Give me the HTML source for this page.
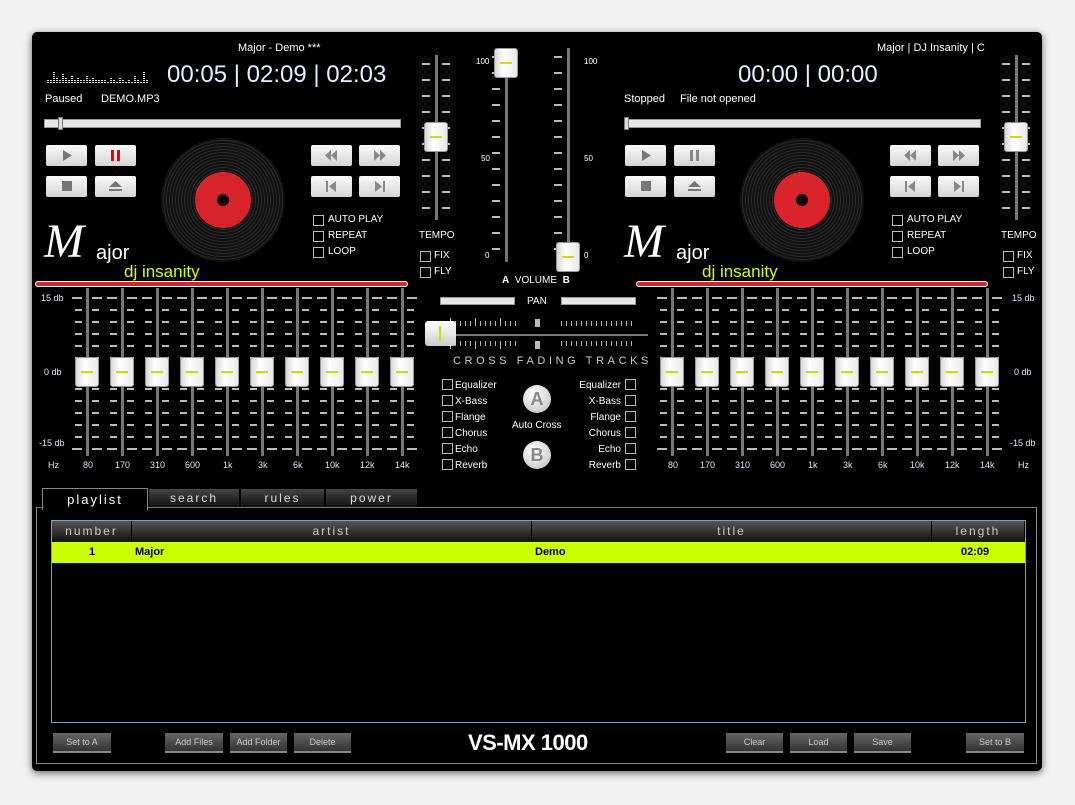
<!DOCTYPE html>
<html><head><meta charset="utf-8">
<style>
*{margin:0;padding:0;box-sizing:border-box}
body{width:1075px;height:805px;background:#f2f2f2;position:relative;overflow:hidden;font-family:"Liberation Sans",sans-serif;color:#fff}
#win{position:absolute;left:32px;top:32px;width:1010px;height:739px;background:#000;border-radius:5px;box-shadow:0 2px 8px rgba(0,0,0,.6)}
.a{position:absolute;white-space:nowrap}
.t{font-size:11px;color:#fff}
.lbl{font-size:10px;color:#fff}
.time{font-size:24px;color:#e4f2ff}
.bar{position:absolute;background:#e6e8e8;border:1px solid #999}
.btn{position:absolute;width:41px;height:21px;background:linear-gradient(#fafafa,#d4d4d4);border-radius:2px}
.cb{position:absolute;width:11px;height:11px;border:1px solid #bbb}
.vin{position:absolute;border-radius:50%;background:repeating-radial-gradient(circle,#111 0 2px,#2a2a2a 2px 3px)}
.lab{position:absolute;border-radius:50%;background:radial-gradient(circle,#000 0 6px,#d8232a 6px 28px,#111 28px)}
.thumb{position:absolute;width:24px;height:30px;background:linear-gradient(90deg,#d8d8d8,#fff 40%,#e8e8e8);border-radius:3px;border:1px solid #999}
.thumb:after{content:"";position:absolute;left:5px;right:5px;top:13px;height:2px;background:#c8e000}
.track{position:absolute;width:3px;background:#777}
.tick{position:absolute;height:2px;background:#bbb}
.redbar{position:absolute;height:6px;background:#d8232a;border-radius:3px;border:1px solid #fff}
.tab{position:absolute;top:489px;height:18px;background:linear-gradient(#444,#111);font-size:12px;letter-spacing:2px;text-align:center;line-height:18px;color:#ddd;border-right:2px solid #000}
.pb{position:absolute;top:733px;height:20px;background:linear-gradient(#666,#333);border-bottom:2px solid #888;font-size:9px;color:#ccc;text-align:center;line-height:18px}
.hdr{position:absolute;top:521px;height:21px;background:linear-gradient(#555,#111);font-size:12px;letter-spacing:2px;color:#ccc;text-align:center;line-height:20px;border-right:1px solid #000}
.script{font-family:"Liberation Serif",serif;font-style:italic;font-size:48px;color:#fff}
.db{font-size:9px;color:#dce8f4}
</style></head><body>
<div id="win"></div>
<div id="L"></div>

<div class="a t" style="left:238px;top:42px">Major - Demo ***</div>
<div class="a time" style="left:167px;top:61px">00:05 | 02:09 | 02:03</div>
<div class="a t" style="left:45px;top:93px">Paused</div>
<div class="a t" style="left:101px;top:93px">DEMO.MP3</div>
<div class="bar" style="left:44px;top:119px;width:357px;height:9px"></div>
<div class="a" style="left:58px;top:117px;width:5px;height:13px;background:#ddd;border:1px solid #777"></div>
<div class="a lbl" style="left:328px;top:214px">AUTO PLAY</div>
<div class="a lbl" style="left:328px;top:230px">REPEAT</div>
<div class="a lbl" style="left:328px;top:246px">LOOP</div>
<div class="a script" style="left:44px;top:214px">M</div>
<div class="a" style="left:96px;top:242px;font-size:20px">ajor</div>
<div class="a" style="left:124px;top:262px;font-size:17px;color:#d4ff00">dj insanity</div>
<div class="redbar" style="left:35px;top:281px;width:373px"></div>
<div class="a lbl" style="left:419px;top:230px">TEMPO</div>
<div class="a lbl" style="left:434px;top:250px">FIX</div>
<div class="a lbl" style="left:434px;top:266px">FLY</div>

<div class="a t" style="left:877px;top:42px">Major | DJ Insanity | C</div>
<div class="a time" style="left:738px;top:61px">00:00 | 00:00</div>
<div class="a t" style="left:624px;top:93px">Stopped</div>
<div class="a t" style="left:680px;top:93px">File not opened</div>
<div class="bar" style="left:624px;top:119px;width:357px;height:9px"></div>
<div class="a" style="left:624px;top:117px;width:5px;height:13px;background:#ddd;border:1px solid #777"></div>
<div class="a lbl" style="left:907px;top:214px">AUTO PLAY</div>
<div class="a lbl" style="left:907px;top:230px">REPEAT</div>
<div class="a lbl" style="left:907px;top:246px">LOOP</div>
<div class="a script" style="left:624px;top:214px">M</div>
<div class="a" style="left:676px;top:242px;font-size:20px">ajor</div>
<div class="a" style="left:702px;top:262px;font-size:17px;color:#d4ff00">dj insanity</div>
<div class="redbar" style="left:636px;top:281px;width:352px"></div>
<div class="a lbl" style="left:1001px;top:230px">TEMPO</div>
<div class="a lbl" style="left:1017px;top:250px">FIX</div>
<div class="a lbl" style="left:1017px;top:266px">FLY</div>

<div class="a" style="left:476px;top:57px;font-size:8px">100</div>
<div class="a" style="left:481px;top:154px;font-size:8px">50</div>
<div class="a" style="left:485px;top:251px;font-size:8px">0</div>
<div class="a" style="left:584px;top:57px;font-size:8px">100</div>
<div class="a" style="left:584px;top:154px;font-size:8px">50</div>
<div class="a" style="left:584px;top:251px;font-size:8px">0</div>
<div class="a lbl" style="left:502px;top:275px"><b>A</b>&nbsp; VOLUME &nbsp;<b>B</b></div>
<div class="bar" style="left:440px;top:297px;width:75px;height:8px"></div>
<div class="bar" style="left:561px;top:297px;width:75px;height:8px"></div>
<div class="a lbl" style="left:527px;top:296px">PAN</div>
<div class="a" style="left:428px;top:334px;width:220px;height:2px;background:#777"></div>
<div class="a" style="left:425px;top:321px;width:31px;height:25px;background:linear-gradient(#fff,#ccc);border-radius:3px"><div style="position:absolute;left:14px;top:5px;width:2px;height:15px;background:#c8e000"></div></div>
<div class="a" style="left:453px;top:355px;font-size:11px;letter-spacing:3.6px;color:#ccc">CROSS FADING TRACKS</div>
<div class="a lbl" style="left:455px;top:378px;line-height:16px">Equalizer<br>X-Bass<br>Flange<br>Chorus<br>Echo<br>Reverb</div>
<div class="a lbl" style="left:560px;width:61px;text-align:right;top:378px;line-height:16px">Equalizer<br>X-Bass<br>Flange<br>Chorus<br>Echo<br>Reverb</div>
<div class="a" style="left:523px;top:385px;width:28px;height:28px;border-radius:50%;background:radial-gradient(circle at 40% 35%,#fff,#bbb);color:#888;font-weight:bold;font-size:18px;text-align:center;line-height:28px">A</div>
<div class="a" style="left:523px;top:441px;width:28px;height:28px;border-radius:50%;background:radial-gradient(circle at 40% 35%,#fff,#bbb);color:#888;font-weight:bold;font-size:18px;text-align:center;line-height:28px">B</div>
<div class="a lbl" style="left:512px;top:420px">Auto Cross</div>

<div class="a db" style="left:41px;top:293px">15 db</div>
<div class="a db" style="left:44px;top:367px">0 db</div>
<div class="a db" style="left:39px;top:438px">-15 db</div>
<div class="a db" style="left:48px;top:460px">Hz</div>
<div class="a db" style="left:1012px;top:293px">15 db</div>
<div class="a db" style="left:1014px;top:367px">0 db</div>
<div class="a db" style="left:1010px;top:438px">-15 db</div>
<div class="a db" style="left:1018px;top:460px">Hz</div>
<div class="a db" style="top:460px;left:83px">80</div>
<div class="a db" style="top:460px;left:115px">170</div>
<div class="a db" style="top:460px;left:150px">310</div>
<div class="a db" style="top:460px;left:185px">600</div>
<div class="a db" style="top:460px;left:223px">1k</div>
<div class="a db" style="top:460px;left:258px">3k</div>
<div class="a db" style="top:460px;left:293px">6k</div>
<div class="a db" style="top:460px;left:325px">10k</div>
<div class="a db" style="top:460px;left:360px">12k</div>
<div class="a db" style="top:460px;left:395px">14k</div>
<div class="a db" style="top:460px;left:668px">80</div>
<div class="a db" style="top:460px;left:700px">170</div>
<div class="a db" style="top:460px;left:735px">310</div>
<div class="a db" style="top:460px;left:770px">600</div>
<div class="a db" style="top:460px;left:808px">1k</div>
<div class="a db" style="top:460px;left:843px">3k</div>
<div class="a db" style="top:460px;left:878px">6k</div>
<div class="a db" style="top:460px;left:910px">10k</div>
<div class="a db" style="top:460px;left:945px">12k</div>
<div class="a db" style="top:460px;left:980px">14k</div>

<div class="a" style="left:36px;top:507px;width:1001px;height:257px;border:1px solid #888;border-top-color:#777"></div>
<div class="tab" style="left:42px;top:488px;width:106px;height:22px;background:#000;border:1px solid #888;border-bottom:none;font-size:13px;line-height:22px;color:#fff">playlist</div>
<div class="tab" style="left:149px;width:92px">search</div>
<div class="tab" style="left:241px;width:85px">rules</div>
<div class="tab" style="left:326px;width:93px">power</div>
<div class="a" style="left:51px;top:520px;width:975px;height:203px;border:1px solid #7f9fbf;background:#000"></div>
<div class="hdr" style="left:52px;width:80px">number</div>
<div class="hdr" style="left:132px;width:400px">artist</div>
<div class="hdr" style="left:532px;width:400px">title</div>
<div class="hdr" style="left:932px;width:93px">length</div>
<div class="a" style="left:52px;top:542px;width:973px;height:21px;background:#ccff00;color:#000;font-size:11px;font-weight:bold;line-height:20px">
<span class="a" style="left:37px">1</span><span class="a" style="left:83px">Major</span><span class="a" style="left:483px">Demo</span><span class="a" style="left:909px">02:09</span></div>
<div class="pb" style="left:53px;width:58px">Set to A</div>
<div class="pb" style="left:165px;width:58px">Add Files</div>
<div class="pb" style="left:230px;width:57px">Add Folder</div>
<div class="pb" style="left:294px;width:57px">Delete</div>
<div class="pb" style="left:726px;width:57px">Clear</div>
<div class="pb" style="left:790px;width:57px">Load</div>
<div class="pb" style="left:854px;width:57px">Save</div>
<div class="pb" style="left:966px;width:58px">Set to B</div>
<div class="a" style="left:468px;top:730px;font-size:22px;font-weight:bold;letter-spacing:-0.5px">VS-MX 1000</div>

<script>
var L=document.getElementById('L');
function d(css,cls){var e=document.createElement('div');e.className=cls||'a';e.style.cssText=css;L.appendChild(e);return e;}
function btns(x1,x2){[[x1,145],[x1+49,145],[x2,145],[x2+48,145],[x1,176],[x1+49,176],[x2,176],[x2+48,176]].forEach(function(p){d('left:'+p[0]+'px;top:'+p[1]+'px','btn');});}
btns(46,311);btns(625,890);
function icon(x,y,svg){var e=d('left:'+x+'px;top:'+y+'px;width:41px;height:21px');e.innerHTML='<svg width="41" height="21">'+svg+'</svg>';}
function icons(x1,x2,pause){
icon(x1,145,'<path d="M17 5 L26 10.5 L17 16Z" fill="#777"/>');
icon(x1+49,145,pause?'<rect x="16" y="5" width="3" height="11" fill="#e00"/><rect x="22" y="5" width="3" height="11" fill="#e00"/>':'<rect x="16" y="5" width="3" height="11" fill="#888"/><rect x="22" y="5" width="3" height="11" fill="#888"/>');
icon(x1,176,'<rect x="16" y="5" width="10" height="10" fill="#777"/>');
icon(x1+49,176,'<path d="M14 11 L20.5 5 L27 11Z M14 13h13v2h-13z" fill="#777"/>');
icon(x2,145,'<path d="M20 5 L14 10.5 L20 16Z M26 5 L20 10.5 L26 16Z" fill="#888"/>');
icon(x2+48,145,'<path d="M15 5 L21 10.5 L15 16Z M21 5 L27 10.5 L21 16Z" fill="#888"/>');
icon(x2,176,'<rect x="15" y="5" width="2" height="11" fill="#888"/><path d="M25 5 L18 10.5 L25 16Z" fill="#888"/>');
icon(x2+48,176,'<path d="M16 5 L23 10.5 L16 16Z" fill="#888"/><rect x="24" y="5" width="2" height="11" fill="#888"/>');}
icons(46,311,true);icons(625,890,false);
[[223,200],[802,200]].forEach(function(c){d('left:'+(c[0]-62)+'px;top:'+(c[1]-62)+'px;width:124px;height:124px','vin');d('left:'+(c[0]-29)+'px;top:'+(c[1]-29)+'px;width:58px;height:58px','lab');});
[[313,215],[313,231],[313,247],[420,251],[420,267],[892,215],[892,231],[892,247],[1003,251],[1003,267]].forEach(function(p){d('left:'+p[0]+'px;top:'+p[1]+'px','cb');});
for(var i=0;i<6;i++){d('left:442px;top:'+(379+i*16)+'px','cb');d('left:625px;top:'+(379+i*16)+'px','cb');}
for(var i=0;i<34;i++){var h=[3,4,12,6,4,10,5,3,8,4,6,4,3,7,4,5,3,3,4,3,2,5,3,2,6,3,2,4,2,8,3,2,12,3][i];for(var k=0;k<h;k+=2)d('left:'+(47+i*3)+'px;top:'+(82-k)+'px;width:2px;height:1px;background:#ddd');}
function eq(x){d('left:'+(x-1)+'px;top:288px;height:168px','track');
[297,309,321,333,345,357,388,400,412,424,436,448].forEach(function(y,j){var w=(j==0||j==11)?10:7;d('left:'+(x-5-w)+'px;top:'+y+'px;width:'+w+'px','tick');d('left:'+(x+5)+'px;top:'+y+'px;width:'+w+'px','tick');});
d('left:'+(x-12)+'px;top:357px','thumb');}
for(var i=0;i<10;i++){eq(87+i*35);eq(672+i*35);}
function vs(x,y0,y1,ty,ticksL){d('left:'+(x-1)+'px;top:'+y0+'px;height:'+(y1-y0)+'px','track');
for(var y=y0+8;y<y1;y+=16){d('left:'+(x-14)+'px;top:'+y+'px;width:8px','tick');if(ticksL)d('left:'+(x+6)+'px;top:'+y+'px;width:8px','tick');}
d('left:'+(x-12)+'px;top:'+ty+'px','thumb');}
vs(436,55,220,122,true);vs(1016,55,220,122,true);
vs(506,48,262,48,false);vs(568,48,262,242,false);
for(var x=440;x<516;x+=5){d('left:'+x+'px;top:'+(x%25==0?318:321)+'px;width:1px;height:'+(x%25==0?8:5)+'px;background:#bbb');d('left:'+x+'px;top:341px;width:1px;height:'+(x%25==0?8:5)+'px;background:#bbb');}
for(var x=561;x<636;x+=5){d('left:'+x+'px;top:'+(x%25==0?318:321)+'px;width:1px;height:'+(x%25==0?8:5)+'px;background:#bbb');d('left:'+x+'px;top:341px;width:1px;height:'+(x%25==0?8:5)+'px;background:#bbb');}
d('left:535px;top:319px;width:5px;height:8px;background:#bbb');d('left:535px;top:341px;width:5px;height:8px;background:#bbb');
d('left:476px;top:298px;width:3px;height:6px;background:#888');d('left:597px;top:298px;width:3px;height:6px;background:#888');
</script>
</body></html>
